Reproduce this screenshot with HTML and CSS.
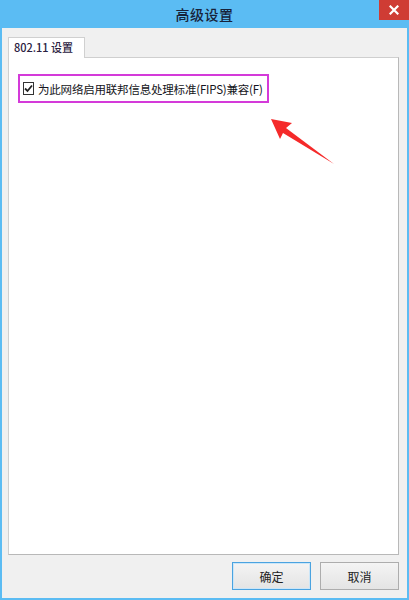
FILE: index.html
```html
<!DOCTYPE html>
<html>
<head>
<meta charset="utf-8">
<link rel="stylesheet" href="styles.css">
</head>
<body>
<div class="window">
  <div class="titlebar">
    <span class="title">高级设置</span>
    <div class="close">
      <svg width="10" height="10" viewBox="0 0 10 10"><path d="M1.5 1.5 L8.5 8.5 M8.5 1.5 L1.5 8.5" stroke="#fff" stroke-width="2.2" stroke-linecap="square"/></svg>
    </div>
  </div>
  <div class="body">
    <div class="tabs">
      <div class="tab">802.11 设置</div>
    </div>
    <div class="panel">
      <div class="highlight">
        <span class="checkbox">
          <svg width="9" height="9" viewBox="0 0 9 9"><path d="M1 4.5 L3.5 7 L8 1.5" fill="none" stroke="#222" stroke-width="1.8"/></svg>
        </span>
        <span class="label">为此网络启用联邦信息处理标准(FIPS)兼容(F)</span>
      </div>
      <svg class="arrow" width="80" height="60" viewBox="0 0 80 60">
        <path d="M0 0 L21 4 L15 9 L63 45 L12 14 L9 20 Z" fill="#f52a2a"/>
      </svg>
    </div>
    <div class="buttons">
      <div class="btn default">确定</div>
      <div class="btn">取消</div>
    </div>
  </div>
</div>
</body>
</html>
```
FILE: styles.css
```css
html, body {
  margin: 0;
  padding: 0;
}
body {
  width: 409px;
  height: 600px;
  overflow: hidden;
  font-family: "Noto Sans CJK SC", "Liberation Sans", sans-serif;
}
.window {
  width: 409px;
  height: 600px;
  box-sizing: border-box;
  background: #5bbcf3;
  padding: 0 2px 2px 2px;
  display: flex;
  flex-direction: column;
}
.titlebar {
  height: 28px;
  position: relative;
  display: flex;
  align-items: center;
  justify-content: center;
}
.title {
  font-size: 14px;
  font-weight: 500;
  color: #17223a;
  letter-spacing: 0.5px;
}
.close {
  position: absolute;
  right: -2px;
  top: 0;
  width: 30px;
  height: 20px;
  background: #cf3c34;
  display: flex;
  align-items: center;
  justify-content: center;
}
.body {
  flex: 1;
  background: #f0f0f0;
  display: flex;
  flex-direction: column;
  padding: 9px 8px 8px 6px;
}
.tabs {
  display: flex;
  height: 20px;
}
.tab {
  border: 1px solid #d0d0d0;
  border-bottom: none;
  background: #fff;
  padding: 0 6px 0 5px;
  font-size: 11px;
  font-weight: 500;
  line-height: 19px;
  color: #2a2040;
  margin-bottom: -1px;
  position: relative;
  z-index: 1;
  width: 64px;
}
.panel {
  flex: 1;
  background: #fff;
  border: 1px solid #cfcfcf;
  border-right-color: #b8b8b8;
  border-bottom-color: #b8b8b8;
  position: relative;
  padding: 16px 0 0 9px;
}
.highlight {
  display: inline-flex;
  align-items: center;
  border: 2px solid #d43ad9;
  height: 25px;
  padding: 0 8px 0 3px;
  gap: 4px;
  width: 236px;
}
.checkbox {
  width: 11px;
  height: 11px;
  border: 1px solid #333;
  background: #fff;
  display: flex;
  align-items: center;
  justify-content: center;
}
.label {
  font-size: 11.5px;
  color: #141420;
  white-space: nowrap;
  letter-spacing: -0.2px;
}
.arrow {
  position: absolute;
  left: 262px;
  top: 61px;
}
.buttons {
  display: flex;
  justify-content: flex-end;
  gap: 9px;
  padding-top: 7px;
}
.btn {
  width: 77px;
  height: 26px;
  border: 1px solid #adadad;
  background: linear-gradient(#f4f4f4, #e4e4e4);
  font-size: 12px;
  display: flex;
  align-items: center;
  justify-content: center;
  color: #222;
}
.btn.default {
  border-color: #4aa3e0;
  box-shadow: inset 0 0 0 1px #cbe6f8;
}
```
